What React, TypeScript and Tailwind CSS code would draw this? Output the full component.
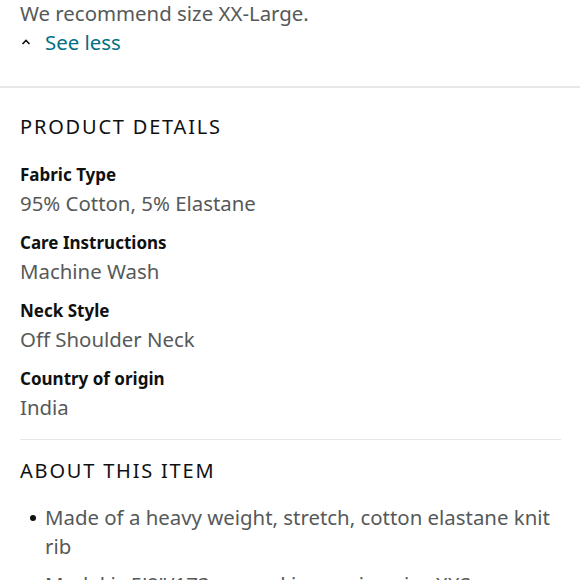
const details = [
  { label: 'Fabric Type', value: '95% Cotton, 5% Elastane' },
  { label: 'Care Instructions', value: 'Machine Wash' },
  { label: 'Neck Style', value: 'Off Shoulder Neck' },
  { label: 'Country of origin', value: 'India' },
];

const bullets = [
  'Made of a heavy weight, stretch, cotton elastane knit rib',
  'Model is 5\'8"/173 cm and is wearing size XXS',
];

export default function App() {
  return (
    <div className="w-[580px] h-[580px] overflow-hidden bg-white font-['Noto_Sans',sans-serif] text-[#0f1111]">
      {/* size note */}
      <div className="px-5 pb-[30px] mt-[-1px]">
        <p className="text-[20.4px] leading-[28px] text-[#565959]">We recommend size XX-Large.</p>
        <div className="flex items-center h-[28px] mt-[1px]">
          <svg width="10" height="8" viewBox="0 0 10 8" className="ml-[1px] mr-[14px]">
            <path d="M1.5 6 L5 2.5 L8.5 6" fill="none" stroke="#0f1111" strokeWidth="1.6" />
          </svg>
          <span className="text-[20.4px] leading-[28px] text-[#007185]">See less</span>
        </div>
      </div>

      <div className="h-[2px] bg-[#e7e7e7]" />

      {/* product details */}
      <div className="px-5 pt-[25px]">
        <h2 className="text-[20px] leading-[28px] tracking-[0.09em] font-normal">PRODUCT DETAILS</h2>
        <div className="flex flex-col gap-3 mt-5">
          {details.map((d) => (
            <div key={d.label}>
              <div className="text-[17px] leading-[28px] font-bold">{d.label}</div>
              <div className="text-[20.4px] leading-[28px] text-[#565959]">{d.value}</div>
            </div>
          ))}
        </div>
        <div className="h-px bg-[#e7e7e7] mt-[18px] mr-[-1px]" />

        {/* about this item */}
        <h2 className="mt-[17px] text-[20px] leading-[28px] tracking-[0.09em] font-normal">ABOUT THIS ITEM</h2>
        <ul className="mt-[18px] flex flex-col gap-[9px]">
          {bullets.map((b) => (
            <li key={b} className="flex">
              <span className="w-[25px] shrink-0 flex justify-center pt-[12px]">
                <span className="w-[6px] h-[6px] rounded-full bg-[#0f1111] ml-[1px]" />
              </span>
              <span className="text-[20.4px] leading-[29px] text-[#565959]">{b}</span>
            </li>
          ))}
        </ul>
      </div>
    </div>
  );
}
